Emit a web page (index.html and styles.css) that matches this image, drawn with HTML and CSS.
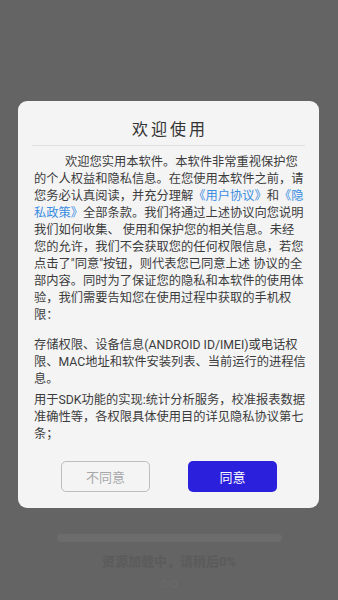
FILE: index.html
```html
<!DOCTYPE html>
<html lang="zh-CN">
<head>
<meta charset="utf-8">
<title>欢迎使用</title>
<link rel="stylesheet" href="styles.css">
</head>
<body>
<div class="page">
  <div class="bar"></div>
  <div class="loading">资源加载中，请稍后0%</div>
  <div class="count">0/0</div>
</div>
<div class="mask">
  <div class="dialog">
    <div class="title">欢迎使用</div>
    <div class="divider"></div>
    <div class="content">
      <p class="para first">
        <span class="line indent">欢迎您实用本软件。本软件非常重视保护您</span>
        <span class="line">的个人权益和隐私信息。在您使用本软件之前，请</span>
        <span class="line">您务必认真阅读，并充分理解<a class="link">《用户协议》</a>和<a class="link">《隐</a></span>
        <span class="line"><a class="link">私政策》</a>全部条款。我们将通过上述协议向您说明</span>
        <span class="line">我们如何收集、 使用和保护您的相关信息。未经</span>
        <span class="line">您的允许，我们不会获取您的任何权限信息，若您</span>
        <span class="line">点击了"同意"按钮，则代表您已同意上述 协议的全</span>
        <span class="line">部内容。同时为了保证您的隐私和本软件的使用体</span>
        <span class="line">验，我们需要告知您在使用过程中获取的手机权</span>
        <span class="line">限：</span>
      </p>
      <p class="para second">
        <span class="line">存储权限、设备信息(ANDROID ID/IMEI)或电话权</span>
        <span class="line">限、MAC地址和软件安装列表、当前运行的进程信</span>
        <span class="line">息。</span>
      </p>
      <p class="para third">
        <span class="line">用于SDK功能的实现:统计分析服务，校准报表数据</span>
        <span class="line">准确性等，各权限具体使用目的详见隐私协议第七</span>
        <span class="line">条；</span>
      </p>
    </div>
    <div class="actions">
      <button class="btn btn-no">不同意</button>
      <button class="btn btn-yes">同意</button>
    </div>
  </div>
</div>
</body>
</html>
```
FILE: styles.css
```css
* { box-sizing: border-box; }
html, body {
  margin: 0;
  padding: 0;
  width: 338px;
  height: 600px;
  overflow: hidden;
  background: #646464;
  font-family: "Roboto", "Noto Sans CJK SC", sans-serif;
}
.page {
  height: 600px;
  display: flex;
  flex-direction: column;
  align-items: center;
  justify-content: flex-end;
  padding-bottom: 8px;
}
.bar {
  width: 225px;
  height: 8px;
  border-radius: 4px;
  background: #6c6c6c;
  margin-bottom: 11px;
}
.loading {
  font-size: 13px;
  line-height: 18px;
  font-weight: bold;
  color: #5b5b5b;
  margin-bottom: 7px;
}
.count {
  font-size: 11px;
  line-height: 14px;
  color: #6b6b6b;
}
.mask {
  position: fixed;
  top: 0;
  left: 0;
  width: 338px;
  height: 600px;
  padding-top: 101px;
  padding-left: 18px;
}
.dialog {
  width: 301px;
  height: 407px;
  background: #f4f4f5;
  border-radius: 9px;
  display: flex;
  flex-direction: column;
}
.title {
  padding-top: 18px;
  height: 44px;
  line-height: 22px;
  text-align: center;
  font-size: 16px;
  letter-spacing: 3px;
  text-indent: 3px;
  color: #333;
}
.divider {
  height: 1px;
  margin: 0 14px;
  background: #e0e0e0;
}
.content {
  padding: 8px 0 0 16px;
  font-size: 12.25px;
  line-height: 17px;
  color: #3c3c3c;
}
.para {
  margin: 0;
}
.second {
  margin-top: 13px;
}
.third {
  margin-top: 4px;
}
.line {
  display: block;
  white-space: nowrap;
}
.indent {
  padding-left: 31px;
}
.link {
  color: #3b8de0;
}
.actions {
  margin-top: 18px;
  display: flex;
  justify-content: center;
  gap: 38px;
  padding-left: 1px;
}
.btn {
  width: 89px;
  height: 31px;
  border-radius: 5px;
  font-family: "Roboto", "Noto Sans CJK SC", sans-serif;
  font-size: 13px;
  padding: 0;
}
.btn-no {
  background: #f4f4f5;
  border: 1.5px solid #bdbdbd;
  color: #a8a8a8;
}
.btn-yes {
  background: #2b20dc;
  border: none;
  color: #ffffff;
}
```
